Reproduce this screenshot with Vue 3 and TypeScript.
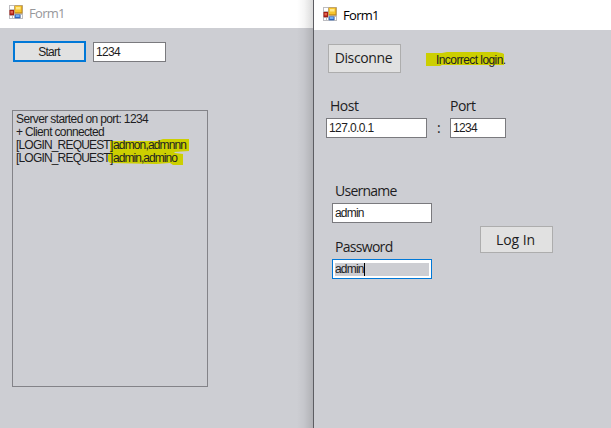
<script setup lang="ts">
import { ref } from 'vue'

const serverPort = ref('1234')
const log = [
  { tag: 'Server started on port: 1234', mark: '', kind: 'started' },
  { tag: '+ Client connected', mark: '', kind: 'connected' },
  { tag: '[LOGIN_REQUEST]', mark: 'admon,admnnn', kind: 'request' },
  { tag: '[LOGIN_REQUEST]', mark: 'admin,admino', kind: 'request' },
]
const host = ref('127.0.0.1')
const port = ref('1234')
const username = ref('admin')
const password = ref('admin')
const windows = ['server', 'client']
</script>

<template>
  <main class="desktop">
    <section v-for="kind in windows" :key="kind" :class="['window', kind]">
      <header class="titlebar">
        <svg class="app-icon" width="14" height="14" viewBox="0 0 14 14">
          <path d="M0 0H14V14H0Z" fill="#bdbdc1" />
          <path d="M1 1H5V4H1ZM1 11H3V13H1ZM4 11H5V13H4ZM12 10H13V13H12Z" fill="#fff" />
          <path d="M5.5 .5H13.5V8.5H5.5Z" fill="#c48b18" />
          <path d="M6 1H12.5V7.3H6Z" fill="#f6c52e" />
          <path d="M7 2H11.5V4.5H7Z" fill="#ffe88b" />
          <path d="M.5 5H5V10.2H.5Z" fill="#a51c12" />
          <path d="M1.5 6H4V8.5H1.5Z" fill="#e36350" />
          <path d="M5.8 9.5H11.3V13.3H5.8Z" fill="#2b65bd" />
          <path d="M6.7 10H10.5V12H6.7Z" fill="#70adf4" />
        </svg>
        <span class="title">Form1</span>
      </header>

      <div v-if="kind === 'server'" class="server-body">
        <div class="start-row">
          <button class="btn start"><span>Start</span></button>
          <div class="field server-port"><span class="num">{{ serverPort }}</span></div>
        </div>
        <div class="log">
          <div v-for="(line, i) in log" :key="i" :class="['line', line.kind]">
            <svg v-if="i === 2" class="marker" width="82" height="27" viewBox="0 0 82 27">
              <path d="M2 2L49 2L55 0H81V12L66 13L67 14L75 15V26L65 26L62 24L48 25L2 24L0 22V16L2 14Z" fill="#cccf00" />
            </svg>
            <span class="tag">{{ line.tag }}</span><span class="mark">{{ line.mark }}</span>
          </div>
        </div>
      </div>

      <div v-else class="client-body">
        <div class="connect-row">
          <button class="btn disconnect"><span>Disconne</span></button>
          <div class="status">
            <svg class="highlight" width="79" height="14" viewBox="0 0 79 14">
              <path d="M0 1L16 1L21 0H70L76 1L78 2V13H16L14 14H0Z" fill="#cccf00" />
            </svg>
            <span>Incorrect login.</span>
          </div>
        </div>
        <div class="address-row">
          <div class="group host">
            <label class="host-label">Host</label>
            <div class="field"><span class="ip">{{ host }}</span></div>
          </div>
          <span class="colon">:</span>
          <div class="group port">
            <label class="port-label">Port</label>
            <div class="field"><span class="num">{{ port }}</span></div>
          </div>
        </div>
        <div class="login-row">
          <div class="credentials">
            <label class="user-label">Username</label>
            <div class="field"><span class="word">{{ username }}</span></div>
            <label class="pass-label">Password</label>
            <div class="field focused">
              <div class="selection"><span class="word">{{ password }}</span><i class="caret"></i></div>
            </div>
          </div>
          <button class="btn login"><span>Log In</span></button>
        </div>
      </div>
    </section>
  </main>
</template>

<style>
body { margin: 0; overflow: hidden; }
</style>

<style scoped>
* { box-sizing: border-box; }
.desktop {
  display: grid;
  grid-template-columns: 313px 298px;
  width: 611px;
  height: 428px;
  font: 12px/13px "Liberation Sans", Arial, sans-serif;
  color: #1d1d22;
  white-space: nowrap;
}
.window { position: relative; background: #cdced3; overflow: hidden; }
.server::after {
  content: "";
  position: absolute;
  top: 0;
  right: 0;
  width: 16px;
  height: 100%;
  background: linear-gradient(to right, transparent, rgba(0, 0, 0, .04) 45%, rgba(0, 0, 0, .14));
}
.client { border-left: 1px solid #5d5d62; }
.titlebar { display: flex; align-items: flex-start; background: #fff; }
.server .titlebar { height: 28px; padding: 5px 0 0 9px; color: #97979b; }
.client .titlebar { height: 30px; padding: 7px 0 0 9px; color: #000; }
.title { margin-left: 6px; font: 13px/16px "Open Sans", "Noto Sans", sans-serif; letter-spacing: -.7px; }
.app-icon { display: block; flex: none; }
.btn {
  display: flex;
  align-items: center;
  justify-content: center;
  padding: 0;
  background: #e1e1e1;
  border: 1px solid #adadad;
  color: #1d1d22;
  font: 14px/18px "Open Sans", "Noto Sans", sans-serif;
}
.server-body { padding: 13px 0 0 12px; }
.start-row { display: flex; align-items: flex-end; margin-left: 1px; gap: 7px; }
.start { width: 73px; height: 21px; border: 2px solid #0078d7; font: 12px/13px "Liberation Sans", sans-serif; letter-spacing: -.8px; padding: 1px 1px 0 0; }
.field { display: flex; align-items: center; height: 20px; padding-left: 2px; background: #fff; border: 1px solid #7a7a7e; }
.server-port { width: 73px; }
.num { letter-spacing: -.7px; }
.ip { letter-spacing: -.6px; }
.word { letter-spacing: -.8px; }
.log { width: 196px; height: 277px; margin-top: 48px; padding: 2px 0 0 3px; border: 1px solid #838388; }
.line { position: relative; height: 13px; }
.line span { position: relative; }
.started { letter-spacing: -.62px; }
.connected { letter-spacing: -.65px; }
.request { letter-spacing: -.85px; }
.request .tag { display: inline-block; width: 97px; letter-spacing: -.82px; }
.line:last-child .mark { letter-spacing: -.95px; }
.marker { position: absolute; left: 92px; top: 0; }
.client-body { padding: 14px 0 0 12px; }
.connect-row { display: flex; align-items: flex-start; margin-left: 2px; gap: 25px; }
.disconnect { width: 73px; height: 29px; padding: 0 2px 2px 0; letter-spacing: -.35px; }
.status { position: relative; padding: 10px 0 0 10px; letter-spacing: -.57px; }
.status span { position: relative; }
.highlight { position: absolute; left: 0; top: 8px; }
.address-row { display: flex; align-items: flex-end; margin-top: 24px; }
label { display: block; font: 14px/18px "Open Sans", "Noto Sans", sans-serif; }
.host-label { padding: 0 0 3px 4px; letter-spacing: -.5px; }
.port-label { padding-bottom: 3px; letter-spacing: -.5px; }
.host { width: 101px; }
.port { width: 56px; }
.colon { width: 23px; padding-left: 10px; font: 14px/20px "Open Sans", sans-serif; }
.login-row { display: flex; align-items: flex-start; margin-top: 44px; }
.credentials { width: 100px; margin-left: 6px; }
.user-label { padding: 0 0 3px 3px; letter-spacing: -.75px; }
.pass-label { padding: 15px 0 3px 3px; letter-spacing: -.7px; }
.focused { border-color: #0078d7; }
.selection { display: flex; align-items: center; width: 94px; height: 13px; background: #cdced3; }
.caret { width: 1px; height: 13px; background: #000; }
.login { width: 73px; height: 27px; margin: 44px 0 0 48px; padding: 1px 2px 0 0; letter-spacing: -.1px; }
</style>
